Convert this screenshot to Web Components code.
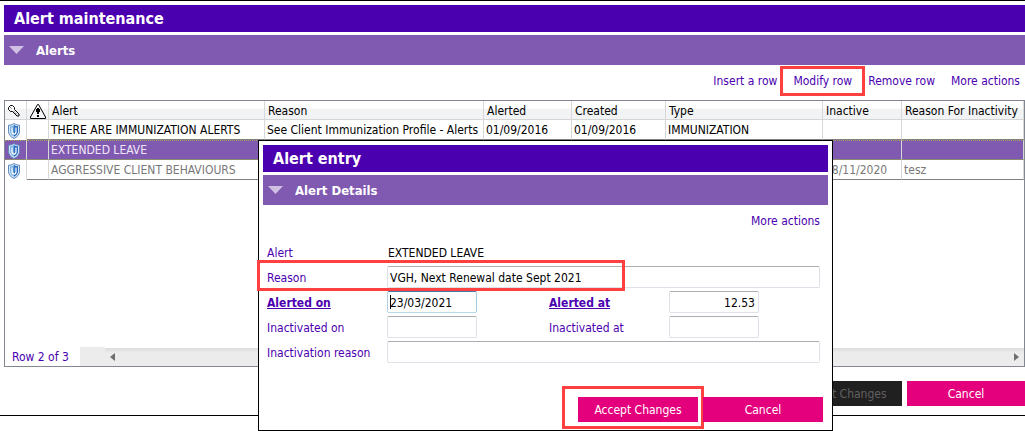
<!DOCTYPE html>
<html lang="en">
<head>
<meta charset="utf-8">
<title>Alert maintenance</title>
<style>
  html, body { margin: 0; background: #fff; }
  body {
    --indigo: #4b00b0; --violet: #8059b0; --pink: #e4007c; --mark: #ff4040;
    font: 12px/16px "DejaVu Sans Condensed", "DejaVu Sans", sans-serif;
    color: #000; min-height: 100vh;
  }
</style>
</head>
<body>
<alert-page></alert-page>
<script>
const define = (name, html, setup) => {
  const template = document.createElement('template');
  template.innerHTML = html;
  customElements.define(name, class extends HTMLElement {
    constructor() {
      super();
      this.attachShadow({ mode: 'open' }).append(template.content.cloneNode(true));
    }
    connectedCallback() { if (setup) setup(this, this.shadowRoot); }
  });
};

define('title-bar', `
<style>
  :host { display: block; background: var(--indigo); color: #fff; padding: 0 10px; }
  h1 { margin: 0; font-size: 16px; line-height: 27px; font-weight: bold; }
</style>
<h1><slot></slot></h1>`);

define('section-bar', `
<style>
  :host { display: flex; align-items: center; gap: 12px; margin-top: 3px; padding: 0 5px; background: var(--violet); color: #fff; }
  h2 { margin: 0; padding-top: 2px; font-size: 13px; line-height: 28px; font-weight: bold; }
  svg { display: block; }
</style>
<svg width="15" height="8" viewBox="0 0 15 8" aria-hidden="true"><path d="M0 0h15L7.500 8z" fill="#d0c0e4"/></svg>
<h2><slot></slot></h2>`);

define('action-link', `
<style>
  :host { display: block; position: relative; }
  a { color: var(--indigo); text-decoration: none; white-space: nowrap; }
  :host([marked])::after { content: ""; position: absolute; inset: -7px -13px; border: 3px solid var(--mark); }
</style>
<a href="#"><slot></slot></a>`);

define('push-button', `
<style>
  :host { display: block; position: relative; width: 120px; }
  button { display: block; width: 100%; height: 25px; padding: 0; border: 0; background: var(--pink); color: #fff; font: inherit; }
  button:disabled { background: #202020; color: #606060; }
  :host([marked])::after { content: ""; position: absolute; inset: -11px -6px -7px -16px; border: 3px solid var(--mark); }
</style>
<button type="button"><slot></slot></button>`, (host, root) => {
  root.querySelector('button').disabled = host.hasAttribute('disabled');
});

define('shield-icon', `
<style>:host, svg { display: block; }</style>
<svg width="12" height="16" viewBox="0 0 12 16" aria-hidden="true">
  <path d="M6 .5C4.500 1.600 2.500 2.200 .5 2.200v6c0 3.500 2.200 5.800 5.500 7.300 3.300-1.500 5.500-3.800 5.500-7.300v-6C9.500 2.200 7.500 1.600 6 .5z" fill="#d5e6f6" stroke="#5c86bd"/>
  <path d="M6 2C4.800 2.800 3.400 3.200 2 3.300v4.900c0 2.600 1.500 4.300 4 5.600z" fill="#7fb2e4"/>
  <path d="M6 2c1.200.8 2.600 1.200 4 1.300v4.900c0 2.600-1.500 4.300-4 5.600z" fill="#2c6cc0"/>
  <path d="M4 4.500v4.300c0 3 4 3 4 0V4.500" fill="none" stroke="#fff" stroke-width="1.200"/>
  <path d="M6 4v5" stroke="#3f7cc8"/>
</svg>`);

define('key-icon', `
<style>:host, svg { display: block; }</style>
<svg width="12" height="12" viewBox="0 0 12 12" fill="none" stroke="#000" aria-hidden="true">
  <path d="M2.500 .5h2l2 2v2l4.500 4.500v2h-2L4.500 6.500h-2l-2-2v-2z"/>
  <path d="M2.500 2.500l1.500 1.500M6 6.500l3 3" stroke-dasharray="1 1"/>
</svg>`);

define('warning-icon', `
<style>:host, svg { display: block; }</style>
<svg width="16" height="15" viewBox="0 0 16 15" fill="none" stroke="#000" aria-hidden="true">
  <path d="M7.500 .5h1L15.500 13v1.500H.5V13z"/>
  <path d="M7 4h2v1h1v3H9v2H7V8H6V5h1zM7 11h2v2H7z" fill="#000" stroke="none"/>
</svg>`);

define('alert-table', `
<style>
  :host { display: flex; flex-direction: column; border: 1px solid #828790; background: #fff; overflow: hidden; }
  table { width: 100%; table-layout: fixed; border-collapse: separate; border-spacing: 0; }
  th, td { box-sizing: border-box; padding: 2px 2px 0; line-height: 17px; text-align: left; font-weight: normal; white-space: nowrap; overflow: hidden; border-right: 1px solid #d8d8d8; }
  th { height: 19px; line-height: 16px; padding: 2px 3px 0; border-bottom: 1px solid #d5d5d5; background: linear-gradient(#fff 40%, #f2f3f5 45%); }
  td { height: 20px; border-bottom: 1px solid #808080; }
  td:first-child { border-bottom-color: #fff; padding-left: 3px; }
  .icon { width: 22px; } .alert { width: 216px; } .reason { width: 219px; } .alerted { width: 88px; }
  .created { width: 94px; } .type { width: 157px; } .inactive { width: 79px; }
  .selected td { padding-top: 1px; color: #f0e8f8; border-top: 1px dotted #a0a84c; border-bottom-color: #8a8a70; background: var(--violet); }
  .closed td { color: #787878; }
  .space { flex: 1; }
  footer { display: flex; height: 19px; background: #ececec; }
  .count { width: 68px; padding-left: 7px; line-height: 20px; color: var(--indigo); background: #fff; white-space: nowrap; }
  .track { flex: 1; display: flex; align-items: center; justify-content: space-between; margin-left: 25px; padding: 0 5px; background: linear-gradient(#fff 0 1px, #dcdcdc 1px, #ececec 6px); }
  .track svg { display: block; }
</style>
<table>
  <colgroup><col class="icon"><col class="icon"><col class="alert"><col class="reason"><col class="alerted"><col class="created"><col class="type"><col class="inactive"><col></colgroup>
  <thead><tr>
    <th aria-label="Access"><key-icon></key-icon></th><th aria-label="Warning"><warning-icon></warning-icon></th>
    <th>Alert</th><th>Reason</th><th>Alerted</th><th>Created</th><th>Type</th><th>Inactive</th><th>Reason For Inactivity</th>
  </tr></thead>
  <tbody>
    <tr><td><shield-icon></shield-icon></td><td></td><td>THERE ARE IMMUNIZATION ALERTS</td><td>See Client Immunization Profile - Alerts</td><td>01/09/2016</td><td>01/09/2016</td><td>IMMUNIZATION</td><td></td><td></td></tr>
    <tr class="selected"><td><shield-icon></shield-icon></td><td></td><td>EXTENDED LEAVE</td><td></td><td></td><td></td><td></td><td></td><td></td></tr>
    <tr class="closed"><td><shield-icon></shield-icon></td><td></td><td>AGGRESSIVE CLIENT BEHAVIOURS</td><td></td><td></td><td></td><td></td><td>18/11/2020</td><td>tesz</td></tr>
  </tbody>
</table>
<div class="space"></div>
<footer>
  <div class="count">Row 2 of 3</div>
  <div class="track">
    <svg width="5" height="8" viewBox="0 0 5 8" aria-hidden="true"><path d="M5 0v8L0 4z" fill="#707070"/></svg>
    <svg width="5" height="8" viewBox="0 0 5 8" aria-hidden="true"><path d="M0 0v8l5-4z" fill="#707070"/></svg>
  </div>
</footer>`);

define('form-field', `
<style>
  :host { display: grid; grid-template-columns: 120px 1fr; align-items: center; height: 22px; position: relative; }
  :host([wide]) { grid-column: 1 / -1; }
  label { padding-top: 2px; color: var(--indigo); white-space: nowrap; }
  :host([required]) label { font-weight: bold; text-decoration: underline; }
  input { display: block; box-sizing: border-box; width: 90px; height: 22px; padding: 2px 3px 0 2px; border: 1px solid #dfe1e8; border-top-color: #abadb3; border-radius: 2px; background: #fff; color: #000; font: inherit; outline: 0; }
  :host([wide]) input { width: 100%; }
  :host([numeric]) input { text-align: right; }
  :host([active]) input { border-color: #3d7bad #a4c9e3 #b7d9ed #b5cfe7; background: linear-gradient(#000, #000) 2px 3px / 1px 14px no-repeat #fff; }
  input:read-only { border-color: transparent; padding: 2px 0 0; }
  :host([marked])::after { content: ""; position: absolute; inset: -6px 195px -3px -10px; border: 3px solid var(--mark); z-index: 1; pointer-events: none; }
</style>
<label for="value"></label><div><input id="value" type="text"></div>`, (host, root) => {
  const input = root.querySelector('input');
  root.querySelector('label').textContent = host.getAttribute('label');
  input.value = host.getAttribute('value') || '';
  input.readOnly = host.hasAttribute('fixed');
});

define('alert-dialog', `
<style>
  :host { display: flex; flex-direction: column; box-sizing: border-box; border: 1px solid #000; background: #fff; padding: 4px; }
  nav { display: flex; justify-content: flex-end; padding: 8px 8px 12px; }
  form { display: grid; grid-template-columns: 282px 1fr; gap: 3px 0; padding: 0 8px 0 4px; }
  .buttons { display: flex; justify-content: flex-end; gap: 5px; margin-top: auto; padding: 0 5px 4px; }
</style>
<title-bar>Alert entry</title-bar>
<section-bar>Alert Details</section-bar>
<nav><action-link>More actions</action-link></nav>
<form>
  <form-field wide fixed label="Alert" value="EXTENDED LEAVE"></form-field>
  <form-field wide marked label="Reason" value="VGH, Next Renewal date Sept 2021"></form-field>
  <form-field required active label="Alerted on" value="23/03/2021"></form-field>
  <form-field required numeric label="Alerted at" value="12.53"></form-field>
  <form-field label="Inactivated on"></form-field>
  <form-field label="Inactivated at"></form-field>
  <form-field wide label="Inactivation reason"></form-field>
</form>
<div class="buttons"><push-button marked>Accept Changes</push-button><push-button>Cancel</push-button></div>`);

define('alert-page', `
<style>
  :host { display: flex; flex-direction: column; position: relative; box-sizing: border-box; min-height: calc(100vh - 15px); border-top: 1px solid #000; border-bottom: 1px solid #000; padding: 4px 0 9px 4px; }
  nav { display: flex; justify-content: flex-end; gap: 16px; padding: 8px 5px 11px; }
  alert-table { flex: 1; }
  .buttons { display: flex; justify-content: flex-end; gap: 5px; margin-top: 14px; }
  .buttons push-button { width: 118px; }
  alert-dialog { position: absolute; left: 258px; right: 192px; top: 139px; height: 291px; }
</style>
<title-bar>Alert maintenance</title-bar>
<section-bar>Alerts</section-bar>
<nav><action-link>Insert a row</action-link><action-link marked>Modify row</action-link><action-link>Remove row</action-link><action-link>More actions</action-link></nav>
<alert-table></alert-table>
<div class="buttons"><push-button disabled>Accept Changes</push-button><push-button>Cancel</push-button></div>
<alert-dialog role="dialog" aria-label="Alert entry"></alert-dialog>`);
</script>
</body>
</html>
